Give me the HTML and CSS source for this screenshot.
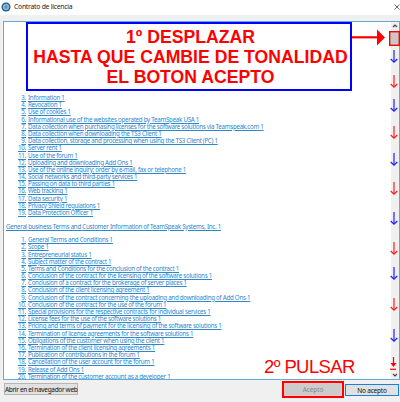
FILE: index.html
```html
<!DOCTYPE html>
<html lang="es">
<head>
<meta charset="utf-8">
<title>Contrato de licencia</title>
<link rel="stylesheet" href="styles.css">
</head>
<body>
<div class="window">
  <header class="titlebar">
    <svg class="logo" width="10" height="10" viewBox="0 0 10 10"><circle cx="5" cy="5" r="4.500" fill="#17598f"/><circle cx="5" cy="5" r="2.800" fill="#7fa9cc" stroke="#b5cadb" stroke-width=".8"/><path d="M4 3.500h2v3H4z" fill="#5e8ebd"/></svg>
    <h1 class="title">Contrato de licencia</h1>
    <svg class="close" width="6" height="6" viewBox="0 0 6 6"><path d="M.5.5l5 5M5.500.5l-5 5" stroke="#444" stroke-width=".8"/></svg>
  </header>
  <main class="viewer">
    <div class="document">
      <ol class="toc" start="3">
        <li><b>3.</b><a>Information 1</a></li>
        <li><b>4.</b><a>Revocation 1</a></li>
        <li><b>5.</b><a>Use of cookies 1</a></li>
        <li><b>6.</b><a>Informational use of the websites operated by TeamSpeak USA 1</a></li>
        <li><b>7.</b><a>Data collection when purchasing licenses for the software solutions via Teamspeak.com 1</a></li>
        <li><b>8.</b><a>Data collection when downloading the TS3 Client 1</a></li>
        <li><b>9.</b><a>Data collection, storage and processing when using the TS3 Client (PC) 1</a></li>
        <li><b>10.</b><a>Server rent 1</a></li>
        <li><b>11.</b><a>Use of the forum 1</a></li>
        <li><b>12.</b><a>Uploading and downloading Add Ons 1</a></li>
        <li><b>13.</b><a>Use of the online inquiry; order by e-mail, fax or telephone 1</a></li>
        <li><b>14.</b><a>Social networks and third-party services 1</a></li>
        <li><b>15.</b><a>Passing on data to third parties 1</a></li>
        <li><b>16.</b><a>Web tracking 1</a></li>
        <li><b>17.</b><a>Data security 1</a></li>
        <li><b>18.</b><a>Privacy Shield regulations 1</a></li>
        <li><b>19.</b><a>Data Protection Officer 1</a></li>
      </ol>
      <p class="section"><a>General business Terms and Customer Information of TeamSpeak Systems, Inc. 1</a></p>
      <ol class="toc">
        <li><b>1.</b><a>General Terms and Conditions 1</a></li>
        <li><b>2.</b><a>Scope 1</a></li>
        <li><b>3.</b><a>Entrepreneurial status 1</a></li>
        <li><b>4.</b><a>Subject matter of the contract 1</a></li>
        <li><b>5.</b><a>Terms and Conditions for the conclusion of the contract 1</a></li>
        <li><b>6.</b><a>Conclusion of the contract for the licensing of the software solutions 1</a></li>
        <li><b>7.</b><a>Conclusion of a contract for the brokerage of server places 1</a></li>
        <li><b>8.</b><a>Conclusion of the client licensing agreement 1</a></li>
        <li><b>9.</b><a>Conclusion of the contract concerning the uploading and downloading of Add Ons 1</a></li>
        <li><b>10.</b><a>Conclusion of the contract for the use of the forum 1</a></li>
        <li><b>11.</b><a>Special provisions for the respective contracts for individual services 1</a></li>
        <li><b>12.</b><a>License fees for the use of the software solutions 1</a></li>
        <li><b>13.</b><a>Pricing and terms of payment for the licensing of the software solutions 1</a></li>
        <li><b>14.</b><a>Termination of license agreements for the software solutions 1</a></li>
        <li><b>15.</b><a>Obligations of the customer when using the client 1</a></li>
        <li><b>16.</b><a>Termination of the client licensing agreements 1</a></li>
        <li><b>17.</b><a>Publication of contributions in the forum 1</a></li>
        <li><b>18.</b><a>Cancellation of the user account for the forum 1</a></li>
        <li><b>19.</b><a>Release of Add Ons 1</a></li>
        <li><b>20.</b><a>Termination of the customer account as a developer 1</a></li>
      </ol>
    </div>
    <div class="scrollbar">
      <svg width="8" height="8" viewBox="0 0 8 8"><path d="M2 5l2-2 2 2" fill="none" stroke="#444" stroke-width="1.200"/></svg>
      <svg width="8" height="8" viewBox="0 0 8 8"><path d="M2 3l2 2 2-2" fill="none" stroke="#444" stroke-width="1.200"/></svg>
    </div>
  </main>
  <footer class="actions">
    <button class="btn browser">Abrir en el navegador web</button>
    <button class="btn accept">Acepto</button>
    <button class="btn decline">No acepto</button>
  </footer>
  <div class="note">1º DESPLAZAR<br>HASTA QUE CAMBIE DE TONALIDAD<br>EL BOTON ACEPTO</div>
  <div class="step">2º PULSAR</div>
  <svg class="marks" width="400" height="402" viewBox="0 0 400 402">
    <defs><g id="down" fill="none" stroke="currentColor"><path d="M0 0V12" stroke-width="1.200"/><path d="M-3.300 9L0 12.200 3.300 9" stroke-width="1.300"/></g></defs>
    <rect x="389.700" y="31.700" width="9.600" height="13.600" fill="#c8c8c8" stroke="#f00" stroke-width="1.400"/>
    <path d="M352 37.300H379" stroke="#f00" stroke-width="2.200"/><path d="M377 29.500l8 8-8 8z" fill="#f00"/>
    <g color="#2222ff"><use href="#down" x="394" y="50"/><use href="#down" x="394" y="99"/><use href="#down" x="394" y="153"/><use href="#down" x="394" y="212"/><use href="#down" x="394" y="267"/><use href="#down" x="394" y="329"/></g>
    <g color="#ff2020"><use href="#down" x="394" y="75"/><use href="#down" x="394" y="126"/><use href="#down" x="394" y="182"/><use href="#down" x="394" y="242"/><use href="#down" x="394" y="298"/><path d="M393.500 357v7" stroke="#f00" stroke-width="1.200"/><path d="M390.500 363h6l-3 4z" fill="#f00"/></g>
    <path d="M390 369.300h6" stroke="#f00" stroke-width="1.200"/>
  </svg>
</div>
</body>
</html>
```

FILE: styles.css
```css
* { box-sizing: border-box; }
body { margin: 0; background: #f0f0f0; font-family: "Noto Sans", sans-serif; }
.window { position: relative; width: 400px; height: 402px; display: flex; flex-direction: column; overflow: hidden; }
.titlebar { height: 15px; flex: none; background: #fff; display: flex; align-items: center; padding: 0 0 2px 1px; }
.title { margin: 0 auto 0 3px; font: 6.800px/10px "Noto Sans", sans-serif; color: #222; letter-spacing: -.25px; }
.viewer { height: 359px; flex: none; margin: 6px 0 0 3px; border: 1px solid #63a9dc; background: #fff; display: flex; overflow: hidden; }
.document { flex: 1; padding: 72px 0 0 2px; color: #2c87cd; font-size: 6.200px; letter-spacing: -.27px; line-height: 7.190px; white-space: nowrap; overflow: hidden; }
.toc { list-style: none; margin: 0; padding: 0; }
.toc li { display: flex; height: 7.190px; }
.toc b { width: 20px; margin-right: 2px; display: flex; justify-content: flex-end; font-weight: 400; text-decoration: underline; }
a { text-decoration: underline; }
.section { margin: 6.400px 0; height: 7.190px; }
.scrollbar { width: 8px; background: #f0f0f0; display: flex; flex-direction: column; justify-content: space-between; }
.actions { display: flex; padding: 1px 1px 0 4px; align-items: flex-start; }
.btn { height: 12px; padding: 0; border: 1px solid #b5b5b5; background: #e1e1e1; color: #111; font: 6.500px/9px "Noto Sans", sans-serif; letter-spacing: -.33px; white-space: nowrap; }
.browser { width: 74px; margin: 2px auto 0 0; }
.accept { width: 62px; height: 17px; border: 2px solid #f00; background: #ccc; color: #888; margin: 0 1px 0 0; box-shadow: inset 0 0 0 1px #f7c4c4; letter-spacing: -.1px; }
.decline { width: 54px; margin-top: 3px; border: 1px solid #1682d9; letter-spacing: -.2px; }
.note { position: absolute; left: 26px; top: 22px; width: 326px; height: 69px; border: 2px solid #00f; background: #fff; color: #f00; font: bold 17.650px/20px "Liberation Sans", Arial, sans-serif; text-align: center; padding: 3px 0 0 3px; white-space: nowrap; }
.step { position: absolute; left: 264px; top: 357px; color: #f00; font: 18.500px/20px "Liberation Sans", Arial, sans-serif; letter-spacing: -.6px; white-space: nowrap; }
.marks { position: absolute; left: 0; top: 0; }
```
